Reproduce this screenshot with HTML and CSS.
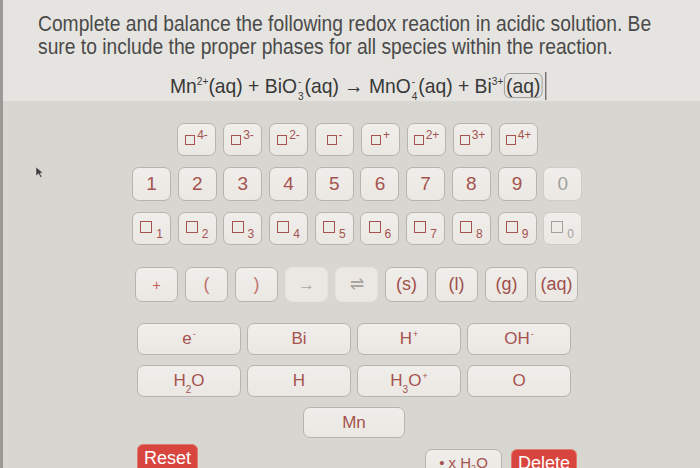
FILE: index.html
```html
<!DOCTYPE html>
<html>
<head>
<meta charset="utf-8">
<link rel="stylesheet" href="styles.css">
</head>
<body>
<div class="page">
  <div class="question">
    <p class="title">Complete and balance the following redox reaction in acidic solution. Be<br>sure to include the proper phases for all species within the reaction.</p>
    <div class="equation">
      <span class="eq">Mn<sup>2+</sup>(aq) + BiO<span class="ss"><span class="s-up">-</span><span class="s-dn">3</span></span>(aq) → MnO<span class="ss"><span class="s-up">-</span><span class="s-dn">4</span></span>(aq) + Bi<sup>3+</sup><span class="sel">(aq)</span><span class="caret"></span></span>
    </div>
  </div>
  <div class="palette">
    <div class="row charges">
      <button class="key"><span><span class="box"></span><sup>4-</sup></span></button>
      <button class="key"><span><span class="box"></span><sup>3-</sup></span></button>
      <button class="key"><span><span class="box"></span><sup>2-</sup></span></button>
      <button class="key"><span><span class="box"></span><sup>-</sup></span></button>
      <button class="key"><span><span class="box"></span><sup>+</sup></span></button>
      <button class="key"><span><span class="box"></span><sup>2+</sup></span></button>
      <button class="key"><span><span class="box"></span><sup>3+</sup></span></button>
      <button class="key"><span><span class="box"></span><sup>4+</sup></span></button>
    </div>
    <div class="row digits">
      <button class="key num">1</button>
      <button class="key num">2</button>
      <button class="key num">3</button>
      <button class="key num">4</button>
      <button class="key num">5</button>
      <button class="key num">6</button>
      <button class="key num">7</button>
      <button class="key num">8</button>
      <button class="key num">9</button>
      <button class="key num off">0</button>
    </div>
    <div class="row digits subs">
      <button class="key"><span><span class="box big"></span><sub>1</sub></span></button>
      <button class="key"><span><span class="box big"></span><sub>2</sub></span></button>
      <button class="key"><span><span class="box big"></span><sub>3</sub></span></button>
      <button class="key"><span><span class="box big"></span><sub>4</sub></span></button>
      <button class="key"><span><span class="box big"></span><sub>5</sub></span></button>
      <button class="key"><span><span class="box big"></span><sub>6</sub></span></button>
      <button class="key"><span><span class="box big"></span><sub>7</sub></span></button>
      <button class="key"><span><span class="box big"></span><sub>8</sub></span></button>
      <button class="key"><span><span class="box big"></span><sub>9</sub></span></button>
      <button class="key off"><span><span class="box big"></span><sub>0</sub></span></button>
    </div>
    <div class="row symbols">
      <button class="key sym small">+</button>
      <button class="key sym light">(</button>
      <button class="key sym light">)</button>
      <button class="key sym off flat">→</button>
      <button class="key sym off flat">⇌</button>
      <button class="key sym">(s)</button>
      <button class="key sym">(l)</button>
      <button class="key sym">(g)</button>
      <button class="key sym">(aq)</button>
    </div>
    <div class="row species first">
      <button class="key wide"><span>e<sup>-</sup></span></button>
      <button class="key wide"><span>Bi</span></button>
      <button class="key wide"><span>H<sup>+</sup></span></button>
      <button class="key wide"><span>OH<sup>-</sup></span></button>
    </div>
    <div class="row species">
      <button class="key wide"><span>H<sub>2</sub>O</span></button>
      <button class="key wide"><span>H</span></button>
      <button class="key wide"><span>H<sub>3</sub>O<sup>+</sup></span></button>
      <button class="key wide"><span>O</span></button>
    </div>
    <div class="row species single">
      <button class="key wide"><span>Mn</span></button>
    </div>
    <div class="actions">
      <button class="red reset">Reset</button>
      <div class="right">
        <button class="key hyd"><span>• x H<sub>2</sub>O</span></button>
        <button class="red delete">Delete</button>
      </div>
    </div>
  </div>
  <svg class="cursor" width="9" height="12" viewBox="0 0 9 12"><path d="M1 1 L1 10 L3.5 7.8 L5.5 11.5 L7 10.8 L5 7.2 L8 7 Z" fill="#3b3b3d" stroke="#d8d6d1" stroke-width="0.6"/></svg>
</div>
</body>
</html>
```

FILE: styles.css
```css
* { box-sizing: border-box; }
html, body { margin: 0; padding: 0; }
body { width: 700px; height: 468px; overflow: hidden; font-family: "Liberation Sans", Arial, sans-serif; }
.page { position: relative; width: 700px; height: 468px; background: #d8d6d1; border-left: 3px solid #9b9995; overflow: hidden; }
.question { height: 101px; background: #e6e4e0; padding: 12px 0 0 35px; }
.title { margin: 0; font-size: 22px; line-height: 23px; color: #4a4a4a; transform: scaleX(0.875); transform-origin: 0 0; width: 760px; }
.equation { padding: 14px 0 0 132px; }
.eq { display: inline-block; font-size: 21px; color: #383838; white-space: nowrap; transform: scaleX(0.92); transform-origin: 0 0; line-height: 28px; }
.eq sup { font-size: 11px; vertical-align: 8px; line-height: 0; }
.ss { display: inline-flex; flex-direction: column; vertical-align: 8px; line-height: 11px; font-size: 11px; margin: 0 1px; }
.s-up { height: 11px; }
.s-dn { height: 11px; padding-top: 4px; }
.sel { border: 1.5px solid #9c9a96; border-radius: 6px; padding: 0 1px; margin-left: 1px; }
.caret { display: inline-block; width: 1.5px; height: 28px; background: #333; vertical-align: -7px; margin-left: 3px; }

.palette { padding-top: 22px; }
.row { display: flex; }
.key { font-family: "Liberation Sans", Arial, sans-serif; background: linear-gradient(#f0eeea, #ebe8e4); border: 1.5px solid #b7b3ae; border-radius: 7px; color: #a5534f; padding: 0; display: flex; align-items: center; justify-content: center; }
.charges { margin-left: 174px; gap: 7px; }
.charges .key { width: 39px; height: 33px; }
.box { display: inline-block; width: 10px; height: 10px; border: 1px solid #a5534f; vertical-align: -1px; }
.box.big { width: 12px; height: 12px; vertical-align: 0; }
.charges sup { font-size: 12px; vertical-align: 5px; margin-left: 2px; line-height: 0; }
.digits { margin-left: 129px; gap: 6.7px; margin-top: 11px; }
.digits .key { width: 39px; height: 34px; }
.num { font-size: 19px; }
.subs { margin-top: 11px; }
.subs .key { height: 33px; }
.subs sub { font-size: 12px; vertical-align: -5px; margin-left: 4px; line-height: 0; }
.key.off { color: #a3a09c; border-color: #cfccc7; }
.key.off .box { border-color: #a3a09c; }
.symbols { margin-left: 132px; gap: 7px; margin-top: 22px; }
.symbols .key { width: 43px; height: 35px; font-size: 18px; color: #a0504c; }
.symbols .small { font-size: 14px; color: #c25a56; }
.symbols .light { color: #c0736f; }
.symbols .flat { border-color: #e6e3df; background: #ebe8e4; color: #a9a6a2; font-size: 17px; }
.species { margin-left: 134px; gap: 6px; margin-top: 10px; }
.species.first { margin-top: 21px; }
.species .key { width: 104px; height: 32px; font-size: 17px; }
.species sup { font-size: 9px; vertical-align: 7px; line-height: 0; margin-left: 1px; }
.species sub { font-size: 10px; vertical-align: -7px; line-height: 0; }
.species.single { margin-left: 300px; }
.species.single .key { width: 102px; height: 31px; }
.actions { display: flex; justify-content: space-between; margin: 6px 0 0 134px; width: 440px; }
.red { font-family: "Liberation Sans", Arial, sans-serif; background: #d8453e; color: #fff; border: 1.5px solid #e27a74; border-radius: 6px; font-size: 18px; padding: 3px 4px 8px; height: 30px; }
.reset { width: 61px; }
.right { display: flex; gap: 9px; padding-top: 5px; }
.delete { width: 66px; }
.hyd { width: 77px; height: 28px; font-size: 15px; align-items: flex-start; padding-top: 4px; }
.hyd sub { font-size: 9px; vertical-align: -3px; }
.cursor { position: absolute; left: 32px; top: 166px; }
```
